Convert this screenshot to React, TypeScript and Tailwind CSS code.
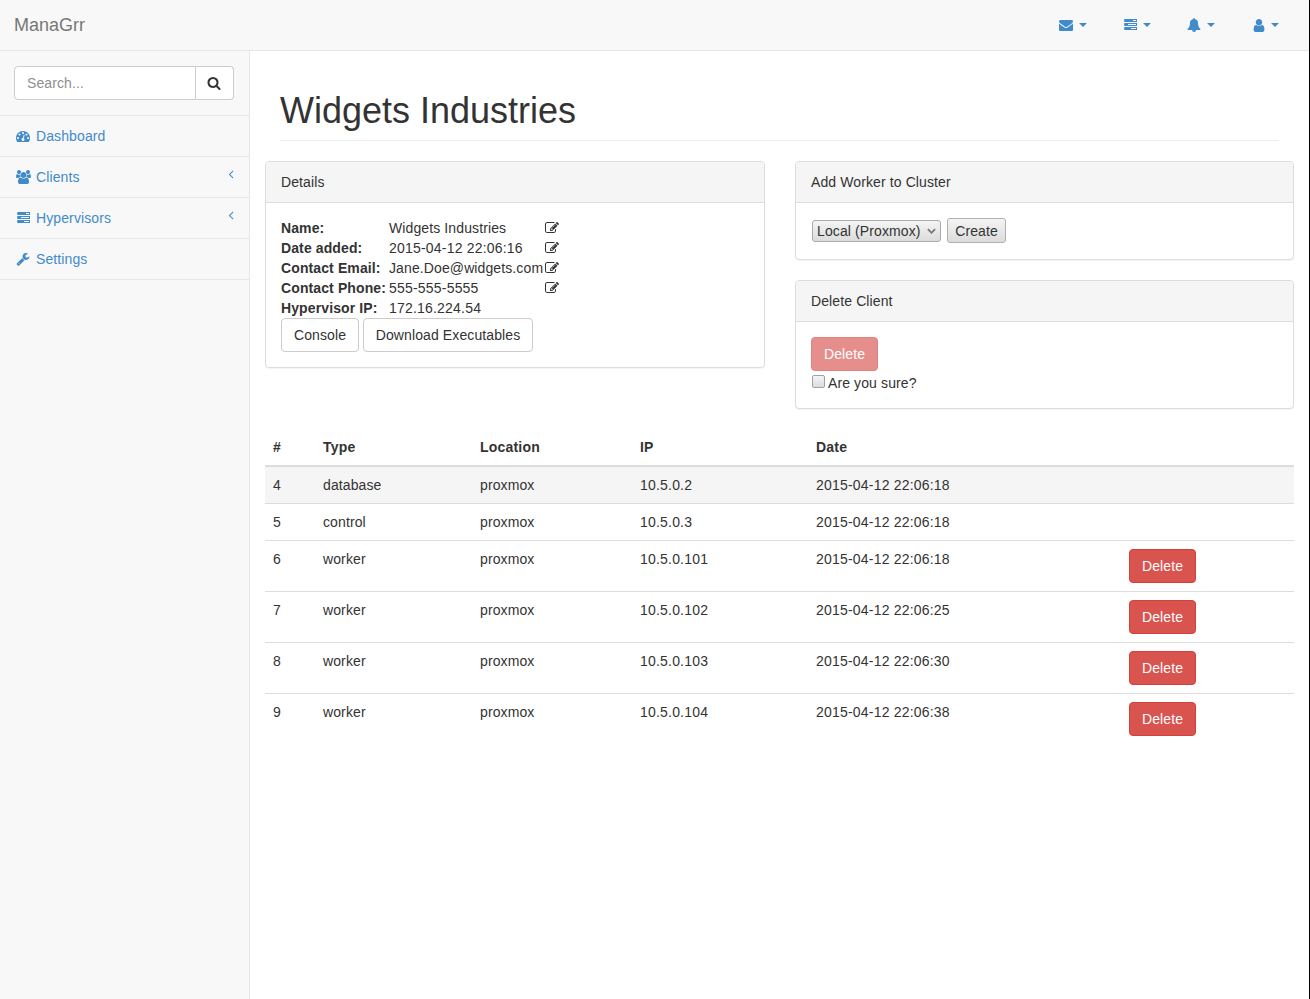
const fontStack = "font-['Liberation_Sans',Arial,sans-serif]";

// Font Awesome 4 glyphs, the react-icons set only has the newer drawings
const paths = {
  envelope: 'M1792 710v794q0 66-47 113t-113 47h-1472q-66 0-113-47t-47-113v-794q44 49 101 87 362 246 497 345 57 42 92.500 65.500t94.500 48 110 24.500h2q51 0 110-24.500t94.500-48 92.500-65.500q170-123 498-345 57-39 100-87zm0-294q0 79-49 151t-122 123q-376 261-468 325-10 7-42.500 30.500t-54 38-52 32.500-57.500 27-50 9h-2q-23 0-50-9t-57.500-27-52-32.500-54-38-42.500-30.500q-91-64-262-182.500t-205-142.500q-62-42-117-115.500t-55-136.500q0-78 41.500-130t118.500-52h1472q65 0 112.500 47t47.500 113z',
  tasks: 'M1024 1408h640v-128h-640v128zm-384-512h1024v-128h-1024v128zm640-512h384v-128h-384v128zm664 832v256q0 26-19 45t-45 19h-1664q-26 0-45-19t-19-45v-256q0-26 19-45t45-19h1664q26 0 45 19t19 45zm0-512v256q0 26-19 45t-45 19h-1664q-26 0-45-19t-19-45v-256q0-26 19-45t45-19h1664q26 0 45 19t19 45zm0-512v256q0 26-19 45t-45 19h-1664q-26 0-45-19t-19-45v-256q0-26 19-45t45-19h1664q26 0 45 19t19 45z',
  bell: 'M912 1696q0-16-16-16-59 0-101.500-42.500t-42.500-101.500q0-16-16-16t-16 16q0 73 51.500 124.500t124.500 51.500q16 0 16-16zm816-288q0 52-38 90t-90 38h-448q0 106-75 181t-181 75-181-75-75-181h-448q-52 0-90-38t-38-90q50-42 91-88t85-119.500 74.500-158.500 50-206 19.500-260q0-152 117-282.500t307-158.500q-8-19-8-39 0-40 28-68t68-28 68 28 28 68q0 20-8 39 190 28 307 158.500t117 282.500q0 139 19.500 260t50 206 74.500 158.500 85 119.500 91 88z',
  user: 'M1536 1399q0 109-62.500 187t-150.500 78h-854q-88 0-150.500-78t-62.500-187q0-85 8.500-160.500t31.500-152 58.500-131 94-89 134.500-34.500q131 128 313 128t313-128q76 0 134.500 34.500t94 89 58.500 131 31.500 152 8.500 160.500zm-256-887q0 159-112.500 271.500t-271.500 112.500-271.500-112.500-112.500-271.500 112.500-271.500 271.500-112.500 271.500 112.500 112.500 271.500z',
  dashboard: 'M384 1152q0-53-37.500-90.500t-90.500-37.500-90.500 37.500-37.500 90.500 37.500 90.500 90.500 37.500 90.500-37.500 37.500-90.500zm192-448q0-53-37.500-90.500t-90.500-37.500-90.500 37.500-37.500 90.500 37.500 90.500 90.500 37.500 90.500-37.500 37.500-90.500zm428 481l101-382q6-26-7.500-48.500t-38.500-29.500-48 6.500-30 39.500l-101 382q-60 5-107 43.500t-63 98.500q-20 77 20 146t117 89 146-20 89-117q16-60-6-117t-72-91zm660-33q0-53-37.500-90.500t-90.500-37.500-90.500 37.500-37.500 90.500 37.500 90.500 90.500 37.500 90.500-37.500 37.500-90.500zm-640-640q0-53-37.500-90.500t-90.500-37.500-90.500 37.500-37.500 90.500 37.500 90.500 90.500 37.500 90.500-37.500 37.500-90.500zm448 192q0-53-37.500-90.500t-90.500-37.500-90.500 37.500-37.500 90.500 37.500 90.500 90.500 37.500 90.500-37.500 37.500-90.500zm320 448q0 261-141 483-19 29-54 29h-1402q-35 0-54-29-141-221-141-483 0-182 71-348t191-286 286-191 348-71 348 71 286 191 191 286 71 348z',
  users: 'M593 896q-162 5-265 128h-134q-82 0-138-40.500t-56-118.500q0-353 124-353 6 0 43.500 21t97.500 42.500 119 21.500q67 0 133-23-5 37-5 66 0 139 81 256zm1071 637q0 120-73 189.500t-194 69.500h-874q-121 0-194-69.500t-73-189.500q0-53 3.500-103.500t14-109 26.500-108.500 43-97.500 62-81 85.500-53.500 111.500-20q10 0 43 21.500t73 48 107 48 135 21.500 135-21.500 107-48 73-48 43-21.500q61 0 111.500 20t85.500 53.500 62 81 43 97.500 26.500 108.500 14 109 3.500 103.500zm-1024-1277q0 106-75 181t-181 75-181-75-75-181 75-181 181-75 181 75 75 181zm704 384q0 159-112.500 271.500t-271.500 112.500-271.500-112.500-112.500-271.500 112.500-271.500 271.500-112.500 271.500 112.500 112.500 271.500zm576 225q0 78-56 118.500t-138 40.500h-134q-103-123-265-128 81-117 81-256 0-29-5-66 66 23 133 23 59 0 119-21.500t97.500-42.500 43.500-21q124 0 124 353zm-128-609q0 106-75 181t-181 75-181-75-75-181 75-181 181-75 181 75 75 181z',
  wrench: 'M448 1472q0-26-19-45t-45-19-45 19-19 45 19 45 45 19 45-19 19-45zm644-420l-682 682q-37 37-90 37-52 0-91-37l-106-108q-38-36-38-90 0-53 38-91l681-681q39 98 114.500 173.500t173.500 114.500zm634-435q0 39-23 106-47 134-164.500 217.500t-258.500 83.500q-185 0-316.500-131.500t-131.500-316.500 131.500-316.500 316.500-131.500q58 0 121.500 16.500t107.500 46.500q16 11 16 28t-16 28l-293 169v224l193 111q5-3 79-48.500t135.500-81 70.500-35.500q15 0 23.500 10t8.500 25z',
  search: 'M1216 832q0-185-131.500-316.500t-316.500-131.500-316.500 131.500-131.500 316.500 131.500 316.500 316.500 131.500 316.500-131.500 131.500-316.500zm512 832q0 52-38 90t-90 38q-54 0-90-38l-343-342q-179 124-399 124-143 0-273.500-55.500t-225-150-150-225-55.500-273.500 55.500-273.500 150-225 225-150 273.500-55.500 273.500 55.500 225 150 150 225 55.500 273.500q0 220-124 399l343 343q37 37 37 90z',
  angleLeft: 'M1203 544q0 13-10 23l-393 393 393 393q10 10 10 23t-10 23l-50 50q-10 10-23 10t-23-10l-466-466q-10-10-10-23t10-23l466-466q10-10 23-10t23 10l50 50q10 10 10 23z',
  edit: 'M888 1184l116-116-152-152-116 116v56h96v96h56zm440-720q-16-16-33 1l-350 350q-17 17-1 33t33-1l350-350q17-17 1-33zm80 594v190q0 119-84.500 203.500t-203.500 84.500h-832q-119 0-203.500-84.500t-84.500-203.500v-832q0-119 84.500-203.500t203.500-84.500h832q63 0 117 25 15 7 18 23 3 17-9 29l-49 49q-14 14-32 8-23-6-45-6h-832q-66 0-113 47t-47 113v832q0 66 47 113t113 47h832q66 0 113-47t47-113v-126q0-13 9-22l64-64q15-15 35-7t20 29zm-96-738l288 288-672 672h-288v-288zm444 132l-92 92-288-288 92-92q28-28 68-28t68 28l152 152q28 28 28 68t-28 68z',
};

function Fa({ name, box = '0 0 1792 1792', className = 'w-[14px] h-[14px]' }: { name: keyof typeof paths; box?: string; className?: string }) {
  return (
    <svg viewBox={box} className={`shrink-0 ${className}`} fill="currentColor">
      <path d={paths[name]} />
    </svg>
  );
}

function TopItem({ children, width }: { children: React.ReactNode; width: string }) {
  return (
    <a className={`flex items-center pl-[15px] h-[50px] text-[#428bca] ${width}`}>
      {children}
      <span className="ml-[6px] w-0 h-0 border-x-4 border-t-4 border-x-transparent border-t-[#428bca]" />
    </a>
  );
}

function SideLink({ icon, label, arrow }: { icon: React.ReactNode; label: string; arrow?: boolean }) {
  return (
    <li className="h-[41px] border-b border-[#e7e7e7] pl-4 pr-[11px] flex items-center text-[#428bca]">
      <span className="w-5 flex items-center">{icon}</span>
      <span>{label}</span>
      {arrow && <span className="ml-auto -mt-1.5"><Fa name="angleLeft" /></span>}
    </li>
  );
}

function Panel({ title, children }: { title: string; children: React.ReactNode }) {
  return (
    <div className="border border-[#ddd] rounded bg-white shadow-[0_1px_1px_rgba(0,0,0,0.05)] mb-5">
      <div className="h-[41px] px-[15px] flex items-center bg-[#f5f5f5] border-b border-[#ddd] rounded-t">{title}</div>
      <div className="p-[15px]">{children}</div>
    </div>
  );
}

const details = [
  { label: 'Name:', value: 'Widgets Industries', edit: true },
  { label: 'Date added:', value: '2015-04-12 22:06:16', edit: true, num: true },
  { label: 'Contact Email:', value: 'Jane.Doe@widgets.com', edit: true },
  { label: 'Contact Phone:', value: '555-555-5555', edit: true, num: true },
  { label: 'Hypervisor IP:', value: '172.16.224.54', edit: false, num: true },
];

const rows = [
  { id: 4, type: 'database', ip: '10.5.0.2', date: '2015-04-12 22:06:18', del: false },
  { id: 5, type: 'control', ip: '10.5.0.3', date: '2015-04-12 22:06:18', del: false },
  { id: 6, type: 'worker', ip: '10.5.0.101', date: '2015-04-12 22:06:18', del: true },
  { id: 7, type: 'worker', ip: '10.5.0.102', date: '2015-04-12 22:06:25', del: true },
  { id: 8, type: 'worker', ip: '10.5.0.103', date: '2015-04-12 22:06:30', del: true },
  { id: 9, type: 'worker', ip: '10.5.0.104', date: '2015-04-12 22:06:38', del: true },
];

export default function App() {
  return (
    <div className={`${fontStack} min-h-screen bg-white border-r border-black text-[14px] leading-5 text-[#333] tracking-[0.11px]`}>
      <nav className="h-[51px] bg-[#f8f8f8] border-b border-[#e7e7e7] flex items-center justify-between pr-[14px]">
        <a className="pl-[14px] text-[18px] text-[#777] tracking-normal">ManaGrr</a>
        <div className="flex">
          <TopItem width="w-16"><Fa name="envelope" /></TopItem>
          <TopItem width="w-16"><Fa name="tasks" /></TopItem>
          <TopItem width="w-[66px]"><Fa name="bell" /></TopItem>
          <TopItem width="w-[57px]"><Fa name="user" box="256 128 1280 1536" className="w-3 h-[13px]" /></TopItem>
        </div>
      </nav>

      <div className="flex min-h-[948px]">
        <aside className="w-[250px] shrink-0 bg-[#f8f8f8] border-r border-[#e7e7e7]">
          <div className="h-[65px] border-b border-[#e7e7e7] px-[14px] pt-[15px]">
            <div className="flex h-[34px] w-[220px]">
              <input
                placeholder="Search..."
                className="min-w-0 flex-1 h-full bg-white border border-[#ccc] rounded-l px-3 outline-none placeholder:text-[#909090]"
              />
              <button className="w-[38px] h-full pr-0.5 bg-white border border-l-0 border-[#ccc] rounded-r flex items-center justify-center">
                <Fa name="search" />
              </button>
            </div>
          </div>
          <ul>
            <SideLink icon={<Fa name="dashboard" />} label="Dashboard" />
            <SideLink icon={<Fa name="users" box="0 0 1920 1792" className="w-[15px] h-[14px]" />} label="Clients" arrow />
            <SideLink icon={<Fa name="tasks" />} label="Hypervisors" arrow />
            <SideLink icon={<Fa name="wrench" />} label="Settings" />
          </ul>
        </aside>

        <main className="flex-1 px-[15px] min-w-0">
          <div className="px-[15px]">
            <h1 className="mt-10 pb-[9px] mb-5 h-[50px] border-b border-[#eee] text-[36px] leading-[40px] font-medium tracking-normal">Widgets Industries</h1>
          </div>

          <div className="grid grid-cols-[500px_499px] gap-x-[30px] items-start">
            <Panel title="Details">
              <div>
                {details.map((d) => (
                  <div key={d.label} className="flex h-5">
                    <b className="w-[108px] shrink-0 whitespace-nowrap">{d.label}</b>
                    <span className={`w-[156px] shrink-0 whitespace-nowrap ${d.num ? 'tracking-[0.2px]' : ''}`}>{d.value}</span>
                    {d.edit && <span className="mt-[3px]"><Fa name="edit" /></span>}
                  </div>
                ))}
              </div>
              <div className="flex gap-1">
                <button className="h-[34px] w-[78px] border border-[#ccc] rounded bg-white">Console</button>
                <button className="h-[34px] w-[170px] border border-[#ccc] rounded bg-white">Download Executables</button>
              </div>
            </Panel>

            <div>
              <Panel title="Add Worker to Cluster">
                <div className="flex items-start gap-[6px] pl-px h-[26px]">
                  <div className="relative mt-0.5">
                    <select className="appearance-none block w-[129px] h-[22px] pl-1 border border-[#aaa] rounded-[3px] bg-linear-to-b from-[#f4f4f4] to-[#dcdcdc] leading-4">
                      <option>Local (Proxmox)</option>
                    </select>
                    <svg viewBox="0 0 10 6" className="absolute right-[5px] top-2 w-[9px] h-[6px] text-[#777] pointer-events-none" fill="none" stroke="currentColor" strokeWidth="2">
                      <path d="M1 1l4 4 4-4" />
                    </svg>
                  </div>
                  <button className="w-[59px] h-[25px] border border-[#b0b0b0] rounded-[3px] bg-linear-to-b from-[#f4f4f4] to-[#dcdcdc]">Create</button>
                </div>
              </Panel>
              <Panel title="Delete Client">
                <button className="block h-[34px] w-[67px] rounded bg-[#d9534f] border border-[#d43f3a] text-white opacity-65">Delete</button>
                <label className="flex items-start">
                  <input type="checkbox" className="appearance-none w-[13px] h-[13px] mt-[4px] ml-px mr-[3px] border border-[#a0a0a0] rounded-[2px] bg-linear-to-b from-[#f4f4f4] to-[#dcdcdc]" />
                  <span className="mt-[2px]">Are you sure?</span>
                </label>
              </Panel>
            </div>
          </div>

          <table className="w-full table-fixed border-collapse">
            <colgroup>
              <col className="w-[50px]" />
              <col className="w-[157px]" />
              <col className="w-[160px]" />
              <col className="w-[176px]" />
              <col className="w-[313px]" />
              <col className="w-[173px]" />
            </colgroup>
            <thead>
              <tr className="border-b-2 border-[#ddd]">
                {['#', 'Type', 'Location', 'IP', 'Date', ''].map((h, i) => (
                  <th key={i} className="p-2 text-left font-bold align-bottom tracking-[0.2px]">{h}</th>
                ))}
              </tr>
            </thead>
            <tbody>
              {rows.map((r, i) => (
                <tr key={r.id} className={`${i < rows.length - 1 ? 'border-b border-[#ddd]' : ''} ${i === 0 ? 'bg-[#f5f5f5]' : ''}`}>
                  <td className="p-2 align-top">{r.id}</td>
                  <td className="p-2 align-top">{r.type}</td>
                  <td className="p-2 align-top">proxmox</td>
                  <td className="p-2 align-top tracking-[0.2px]">{r.ip}</td>
                  <td className="p-2 align-top tracking-[0.2px]">{r.date}</td>
                  <td className="p-2 align-top">
                    {r.del && <button className="block h-[34px] w-[67px] rounded bg-[#d9534f] border border-[#d43f3a] text-white">Delete</button>}
                  </td>
                </tr>
              ))}
            </tbody>
          </table>
        </main>
      </div>
    </div>
  );
}
